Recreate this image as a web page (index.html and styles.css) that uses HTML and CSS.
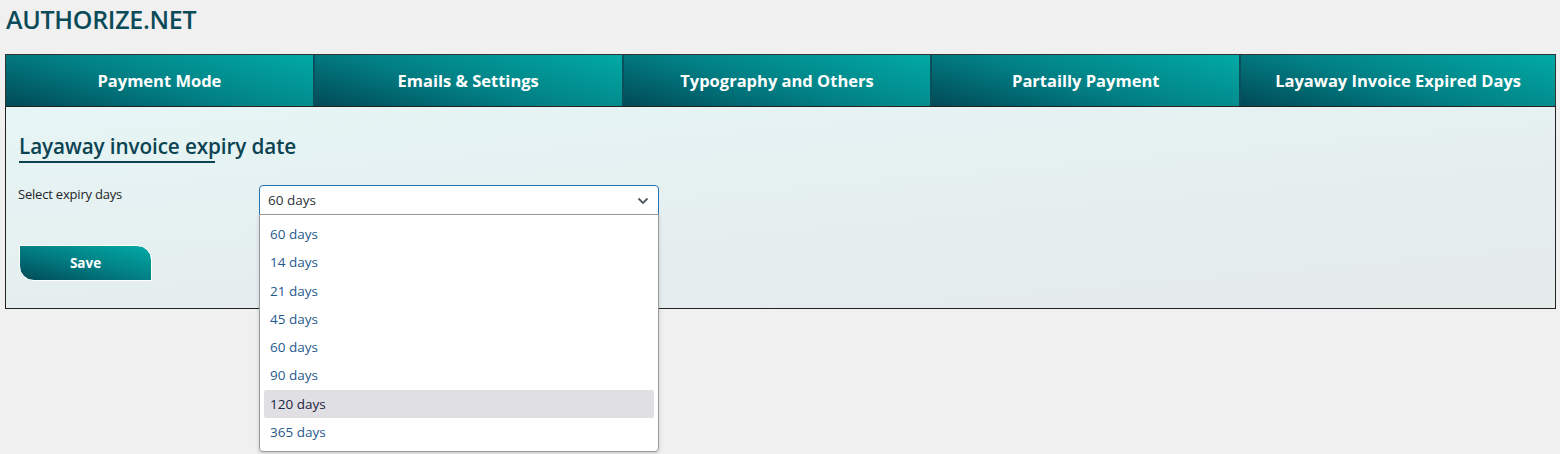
FILE: index.html
```html
<!DOCTYPE html>
<html>
<head>
<meta charset="utf-8">
<link rel="stylesheet" href="styles.css">
</head>
<body>
<h1 class="brand">AUTHORIZE.NET</h1>
<div class="wrap">
  <nav class="tabs">
    <div class="tab">Payment Mode</div>
    <div class="tab">Emails &amp; Settings</div>
    <div class="tab">Typography and Others</div>
    <div class="tab">Partailly Payment</div>
    <div class="tab active">Layaway Invoice Expired Days</div>
  </nav>
  <section class="panel">
    <h2 class="heading">Layaway invoice expiry date</h2>
    <div class="row">
      <label class="label">Select expiry days</label>
      <div class="select-wrap">
        <div class="select">
          <span>60 days</span>
          <svg class="chev" width="12" height="8" viewBox="0 0 12 8"><path d="M1.5 1.5 L6 6 L10.5 1.5" fill="none" stroke="#50575e" stroke-width="1.8"/></svg>
        </div>
        <ul class="menu">
          <li>60 days</li>
          <li>14 days</li>
          <li>21 days</li>
          <li>45 days</li>
          <li>60 days</li>
          <li>90 days</li>
          <li class="hover">120 days</li>
          <li>365 days</li>
        </ul>
      </div>
    </div>
    <button class="save">Save</button>
  </section>
</div>
</body>
</html>
```
FILE: styles.css
```css
* { box-sizing: border-box; }
html, body { margin: 0; }
html { min-height: 100%; background: #f0f0f1; }
body {
  min-height: 454px;
  background: #f0f0f1;
  font-family: "Open Sans", "Noto Sans", sans-serif;
  padding: 0 4px 0 5px;
}
.brand {
  margin: 0;
  padding: 4px 0 0 1px;
  height: 54px;
  font-size: 25px;
  font-weight: 600;
  color: #0b4a58;
  letter-spacing: -0.3px;
  line-height: 30px;
}
.wrap { width: 1551px; }
.tabs {
  display: flex;
  border: 1px solid #333;
  border-bottom: none;
  height: 52px;
}
.tab {
  flex: 1 1 0;
  min-width: max-content;
  display: flex;
  align-items: center;
  justify-content: center;
  padding: 0 34px;
  color: #fff;
  font-weight: 700;
  font-size: 16.5px;
  background: linear-gradient(15deg, #014a57 0%, #027f84 45%, #01aaa5 100%);
  border-left: 2px solid #0b4f5c;
}
.tab:first-child { border-left: none; }
.panel {
  border: 1px solid #222;
  height: 203px;
  background: linear-gradient(175deg, #e6f5f5 0%, #e5eeef 60%, #e5eaeb 100%);
  padding: 24px 13px 0 13px;
}
.heading {
  display: inline-block;
  margin: 0;
  font-size: 20.7px;
  font-weight: 600;
  color: #0b4352;
  line-height: 30px;
  letter-spacing: -0.1px;
}
.heading::after {
  content: "";
  display: block;
  width: 196px;
  height: 2px;
  background: #0b4352;
}
.row {
  display: flex;
  margin-top: 22px;
  height: 31px;
}
.label {
  width: 241px;
  font-size: 13px;
  color: #1d2327;
  margin-left: -1px;
  letter-spacing: -0.2px;
}
.select-wrap {
  position: relative;
  width: 400px;
}
.select {
  height: 30px;
  border: 1px solid #2271b1;
  border-radius: 4px 4px 0 0;
  background: #fff;
  display: flex;
  align-items: center;
  justify-content: space-between;
  padding: 0 9px 0 8px;
  font-size: 13.5px;
  color: #2c3338;
}
.chev { margin-top: 1px; }
.menu {
  position: absolute;
  top: 29px;
  left: 0;
  width: 400px;
  margin: 0;
  padding: 5px 4px;
  list-style: none;
  background: #fff;
  border: 1px solid #9a9a9a;
  border-radius: 0 0 4px 4px;
  box-shadow: 0 2px 4px rgba(0,0,0,0.15);
  z-index: 2;
}
.menu li {
  height: 28.3px;
  line-height: 28px;
  padding-left: 6px;
  font-size: 13.5px;
  color: #1f5a8e;
  border-radius: 2px;
}
.menu li.hover { background: #dfdfe4; color: #1e2540; }
.save {
  display: block;
  margin: 29px 0 0 0;
  width: 133px;
  height: 36px;
  border: 1px solid #fff;
  border-radius: 0 15px 0 15px;
  background: linear-gradient(15deg, #014a57 0%, #027f84 50%, #01aaa5 100%);
  color: #fff;
  font-family: inherit;
  font-weight: 700;
  font-size: 13.5px;
}
```
